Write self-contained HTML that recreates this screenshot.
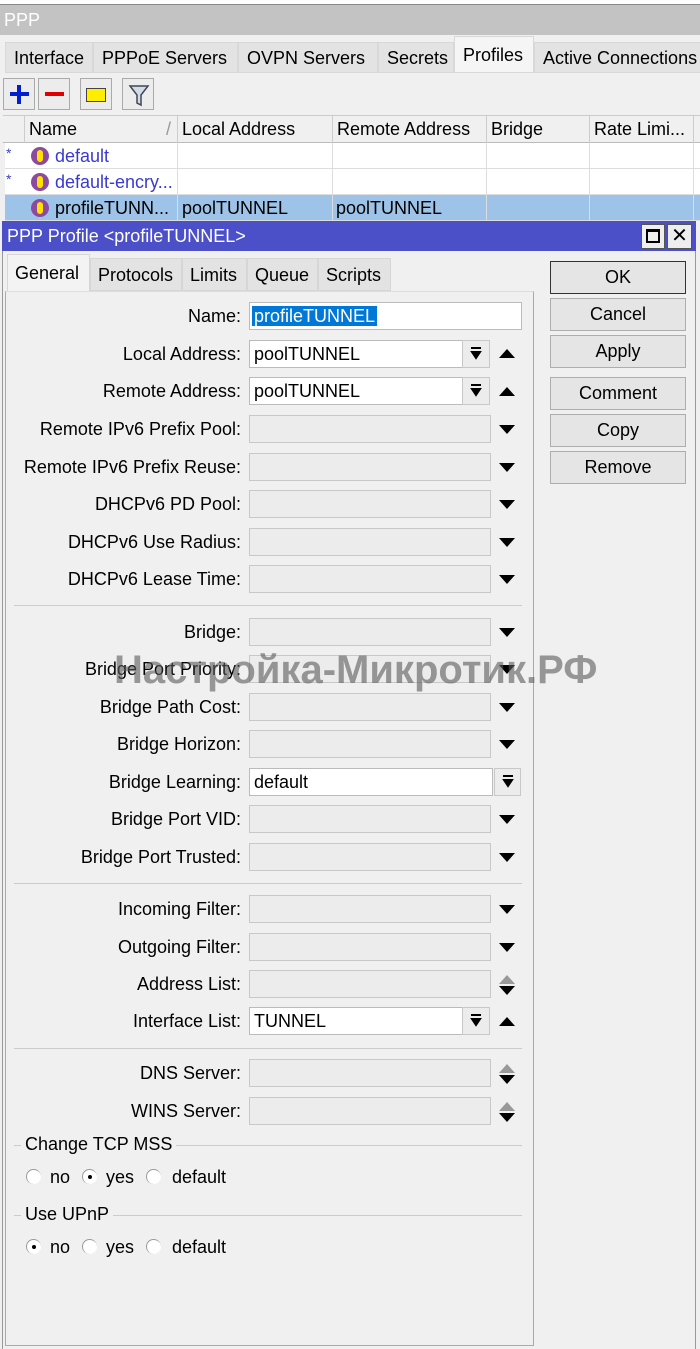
<!DOCTYPE html>
<html><head><meta charset="utf-8"><style>
*{box-sizing:border-box;margin:0;padding:0}
body{width:700px;height:1349px;overflow:hidden;background:#f0f0f0;font-family:"Liberation Sans",Arial,sans-serif;font-size:18px;color:#000;position:relative}
.a{position:absolute}
.tab{position:absolute;top:42px;height:31px;background:#e3e3e3;border:1px solid #d8d8d8;line-height:30px;padding-left:8px;font-size:18px}
.tb{position:absolute;top:78px;width:32px;height:32px;border:1px solid #aaa;background:#ececec}
.th{position:absolute;top:115px;height:28px;border-right:1px solid #ccc;line-height:28px;padding-left:4px;font-size:18px}
.row{position:absolute;left:5px;width:695px;height:26px;border-bottom:1px solid #ddd;background:#fff}
.cell{position:absolute;top:0;height:26px;line-height:26px;font-size:18px;border-right:1px solid #ddd}
.ic{position:absolute;left:26px;top:4px;width:18px;height:18px;border-radius:50%;background:#8b4a9e}
.ic:after{content:"";position:absolute;left:6px;top:3px;width:6px;height:12px;background:#ffe000;border-radius:3px}
.dt{position:absolute;top:258px;height:33px;background:#e3e3e3;border:1px solid #d6d6d6;line-height:32px;padding-left:7px;font-size:18px}
.btn{position:absolute;left:550px;width:136px;height:33px;border:1px solid #adadad;background:#e5e5e5;text-align:center;line-height:31px;font-size:18px}
.lb{position:absolute;right:459px;text-align:right;font-size:18px;white-space:nowrap}
.f{position:absolute;left:249px;width:242px;height:28px;border:1px solid #c8c8c8;background:#ececec;line-height:26px;padding-left:4px;font-size:18px}
.fw{background:#fff;border-color:#bbb}
.dd{position:absolute;width:28px;height:28px;border:1px solid #c8c8c8;background:#ececec}
.dn{position:absolute;left:499px;width:0;height:0;border-left:8px solid transparent;border-right:8px solid transparent;border-top:9px solid #000}
.up{position:absolute;left:499px;width:0;height:0;border-left:8px solid transparent;border-right:8px solid transparent;border-bottom:9px solid #000}
.sep{position:absolute;left:14px;width:508px;height:1px;background:#ccc}
.rd{position:absolute;width:15px;height:15px;border-radius:50%;background:#fff;border-left:1px solid #999;border-top:1px solid #999}
.dot{position:absolute;left:5px;top:5px;width:4px;height:4px;background:#000;border-radius:50%}
</style></head><body>
<div class="a" style="left:0;top:0;width:700px;height:5px;background:#fff;border-bottom:1px solid #888"></div>
<div class="a" style="left:0;top:5px;width:700px;height:30px;background:#c3c3c3;color:#fff;font-size:18px;line-height:30px;padding-left:4px">PPP</div>
<div class="tab" style="left:5px;width:88px">Interface</div>
<div class="tab" style="left:93px;width:145px">PPPoE Servers</div>
<div class="tab" style="left:238px;width:140px">OVPN Servers</div>
<div class="tab" style="left:378px;width:76px">Secrets</div>
<div class="tab" style="left:454px;top:36px;height:37px;width:80px;background:#f5f5f5;line-height:36px">Profiles</div>
<div class="tab" style="left:534px;width:170px">Active Connections</div>
<div class="tb" style="left:3px"><div class="a" style="left:6px;top:13px;width:19px;height:4px;background:#0020d0"></div><div class="a" style="left:13px;top:6px;width:4px;height:19px;background:#0020d0"></div></div>
<div class="tb" style="left:38px"><div class="a" style="left:6px;top:13px;width:19px;height:4px;background:#e00000"></div></div>
<div class="tb" style="left:80px"><div class="a" style="left:5px;top:9px;width:20px;height:14px;background:#ffee00;border:1px solid #444"></div></div>
<div class="tb" style="left:122px"><svg class="a" style="left:5px;top:4px" width="22" height="24"><path d="M2 3h18l-7 9v10l-4-2v-8z" fill="#d0dde8" stroke="#445" stroke-width="1.5"/></svg></div>
<div class="a" style="left:3px;top:115px;width:697px;height:28px;background:#f0f0f0;border-top:1px solid #ccc;border-bottom:1px solid #bbb"></div>
<div class="th" style="left:3px;width:22px"></div>
<div class="th" style="left:25px;width:153px">Name<span style="position:absolute;right:6px;color:#999">/</span></div>
<div class="th" style="left:178px;width:155px">Local Address</div>
<div class="th" style="left:333px;width:154px">Remote Address</div>
<div class="th" style="left:487px;width:103px">Bridge</div>
<div class="th" style="left:590px;width:104px">Rate Limi...</div>
<div class="row" style="top:143px"><span class="a" style="left:1px;top:2px;color:#4040c0;font-size:14px">*</span><div class="ic"></div><div class="cell" style="left:20px;width:153px;padding-left:30px;color:#3a3ad0">default</div><div class="cell" style="left:173px;width:155px"></div><div class="cell" style="left:328px;width:154px"></div><div class="cell" style="left:482px;width:103px"></div><div class="cell" style="left:585px;width:104px"></div></div>
<div class="row" style="top:169px"><span class="a" style="left:1px;top:2px;color:#4040c0;font-size:14px">*</span><div class="ic"></div><div class="cell" style="left:20px;width:153px;padding-left:30px;color:#3a3ad0">default-encry...</div><div class="cell" style="left:173px;width:155px"></div><div class="cell" style="left:328px;width:154px"></div><div class="cell" style="left:482px;width:103px"></div><div class="cell" style="left:585px;width:104px"></div></div>
<div class="row" style="top:195px;background:#9dc3e8"><div class="ic"></div><div class="cell" style="left:20px;width:153px;padding-left:30px">profileTUNN...</div><div class="cell" style="left:173px;width:155px;padding-left:4px">poolTUNNEL</div><div class="cell" style="left:328px;width:154px;padding-left:3px">poolTUNNEL</div><div class="cell" style="left:482px;width:103px"></div><div class="cell" style="left:585px;width:104px"></div></div>
<div class="a" style="left:2px;top:221px;width:694px;height:1128px;background:#f0f0f0;border-left:1px solid #999;border-right:1px solid #999"></div>
<div class="a" style="left:2px;top:221px;width:694px;height:30px;background:#4b4fc8;color:#fff;font-size:18px;line-height:31px;padding-left:5px">PPP Profile &lt;profileTUNNEL&gt;</div>
<div class="a" style="left:641px;top:224px;width:24px;height:25px;background:#eee;border:1px solid #555"><div class="a" style="left:4px;top:4px;width:14px;height:14px;border:2px solid #000;border-top-width:3px"></div></div>
<div class="a" style="left:667px;top:224px;width:25px;height:25px;background:#eee;border:1px solid #555;text-align:center;line-height:23px;font-size:20px">✕</div>
<div class="a" style="left:5px;top:291px;width:529px;height:1055px;border:1px solid #aaa;border-top:1px solid #ddd"></div>
<div class="dt" style="left:7px;top:254px;height:37px;width:83px;background:#f3f3f3;border-bottom:none;line-height:36px">General</div>
<div class="dt" style="left:90px;width:92px">Protocols</div>
<div class="dt" style="left:182px;width:65px">Limits</div>
<div class="dt" style="left:247px;width:71px">Queue</div>
<div class="dt" style="left:318px;width:73px">Scripts</div>
<div class="btn" style="top:261px;border:1px solid #333">OK</div>
<div class="btn" style="top:298px">Cancel</div>
<div class="btn" style="top:335px">Apply</div>
<div class="btn" style="top:377px">Comment</div>
<div class="btn" style="top:414px">Copy</div>
<div class="btn" style="top:451px">Remove</div>

<div class="lb" style="top:306px">Name:</div>
<div class="f fw" style="top:302px;width:273px;padding-left:2px"><span style="background:#0078d7;color:#fff;padding:0 2px">profileTUNNEL</span></div>

<div class="lb" style="top:344px">Local Address:</div><div class="f fw" style="top:340px;width:214px">poolTUNNEL</div>
<div class="dd" style="left:462px;top:340px"><svg width="26" height="26"><path d="M8 7h10M9 11h8l-4 6z" stroke="#000" stroke-width="2" fill="#000"/></svg></div><div class="up" style="top:349px"></div>
<div class="lb" style="top:381px">Remote Address:</div><div class="f fw" style="top:377px;width:214px">poolTUNNEL</div>
<div class="dd" style="left:462px;top:377px"><svg width="26" height="26"><path d="M8 7h10M9 11h8l-4 6z" stroke="#000" stroke-width="2" fill="#000"/></svg></div><div class="up" style="top:387px"></div>

<div class="lb" style="top:419px">Remote IPv6 Prefix Pool:</div><div class="f" style="top:415px"></div><div class="dn" style="top:425px"></div>
<div class="lb" style="top:457px">Remote IPv6 Prefix Reuse:</div><div class="f" style="top:453px"></div><div class="dn" style="top:463px"></div>
<div class="lb" style="top:494px">DHCPv6 PD Pool:</div><div class="f" style="top:490px"></div><div class="dn" style="top:500px"></div>
<div class="lb" style="top:532px">DHCPv6 Use Radius:</div><div class="f" style="top:528px"></div><div class="dn" style="top:538px"></div>
<div class="lb" style="top:569px">DHCPv6 Lease Time:</div><div class="f" style="top:565px"></div><div class="dn" style="top:575px"></div>
<div class="sep" style="top:605px"></div>
<div class="lb" style="top:622px">Bridge:</div><div class="f" style="top:618px"></div><div class="dn" style="top:628px"></div>
<div class="lb" style="top:659px">Bridge Port Priority:</div><div class="f" style="top:655px"></div><div class="dn" style="top:665px"></div>
<div class="lb" style="top:697px">Bridge Path Cost:</div><div class="f" style="top:693px"></div><div class="dn" style="top:703px"></div>
<div class="lb" style="top:734px">Bridge Horizon:</div><div class="f" style="top:730px"></div><div class="dn" style="top:740px"></div>
<div class="lb" style="top:772px">Bridge Learning:</div><div class="f fw" style="top:768px;width:244px">default</div>
<div class="dd" style="left:494px;top:768px;width:27px"><svg width="26" height="26"><path d="M8 7h10M9 11h8l-4 6z" stroke="#000" stroke-width="2" fill="#000"/></svg></div>
<div class="lb" style="top:809px">Bridge Port VID:</div><div class="f" style="top:805px"></div><div class="dn" style="top:815px"></div>
<div class="lb" style="top:847px">Bridge Port Trusted:</div><div class="f" style="top:843px"></div><div class="dn" style="top:853px"></div>
<div class="sep" style="top:883px"></div>
<div class="lb" style="top:899px">Incoming Filter:</div><div class="f" style="top:895px"></div><div class="dn" style="top:905px"></div>
<div class="lb" style="top:937px">Outgoing Filter:</div><div class="f" style="top:933px"></div><div class="dn" style="top:943px"></div>
<div class="lb" style="top:974px">Address List:</div><div class="f" style="top:970px"></div>
<div class="up" style="top:975px;border-bottom-color:#999"></div><div class="dn" style="top:986px"></div>
<div class="lb" style="top:1011px">Interface List:</div><div class="f fw" style="top:1007px;width:214px">TUNNEL</div>
<div class="dd" style="left:462px;top:1007px"><svg width="26" height="26"><path d="M8 7h10M9 11h8l-4 6z" stroke="#000" stroke-width="2" fill="#000"/></svg></div><div class="up" style="top:1017px"></div>
<div class="sep" style="top:1048px"></div>
<div class="lb" style="top:1063px">DNS Server:</div><div class="f" style="top:1059px"></div>
<div class="up" style="top:1064px;border-bottom-color:#999"></div><div class="dn" style="top:1075px"></div>
<div class="lb" style="top:1101px">WINS Server:</div><div class="f" style="top:1097px"></div>
<div class="up" style="top:1102px;border-bottom-color:#999"></div><div class="dn" style="top:1113px"></div>

<div class="sep" style="top:1145px"></div>
<div class="a" style="left:21px;top:1134px;background:#f0f0f0;padding:0 4px">Change TCP MSS</div>
<div class="rd" style="left:26px;top:1169px"></div><div class="a" style="left:50px;top:1167px">no</div>
<div class="rd" style="left:82px;top:1169px"><div class="dot"></div></div><div class="a" style="left:106px;top:1167px">yes</div>
<div class="rd" style="left:146px;top:1169px"></div><div class="a" style="left:172px;top:1167px">default</div>
<div class="sep" style="top:1215px"></div>
<div class="a" style="left:21px;top:1204px;background:#f0f0f0;padding:0 4px">Use UPnP</div>
<div class="rd" style="left:26px;top:1239px"><div class="dot"></div></div><div class="a" style="left:50px;top:1237px">no</div>
<div class="rd" style="left:82px;top:1239px"></div><div class="a" style="left:106px;top:1237px">yes</div>
<div class="rd" style="left:146px;top:1239px"></div><div class="a" style="left:172px;top:1237px">default</div>

<div class="a" style="left:114px;top:648px;font-size:40px;font-weight:bold;color:rgba(90,90,90,0.6);white-space:nowrap">Настройка-Микротик.РФ</div>
</body></html>
